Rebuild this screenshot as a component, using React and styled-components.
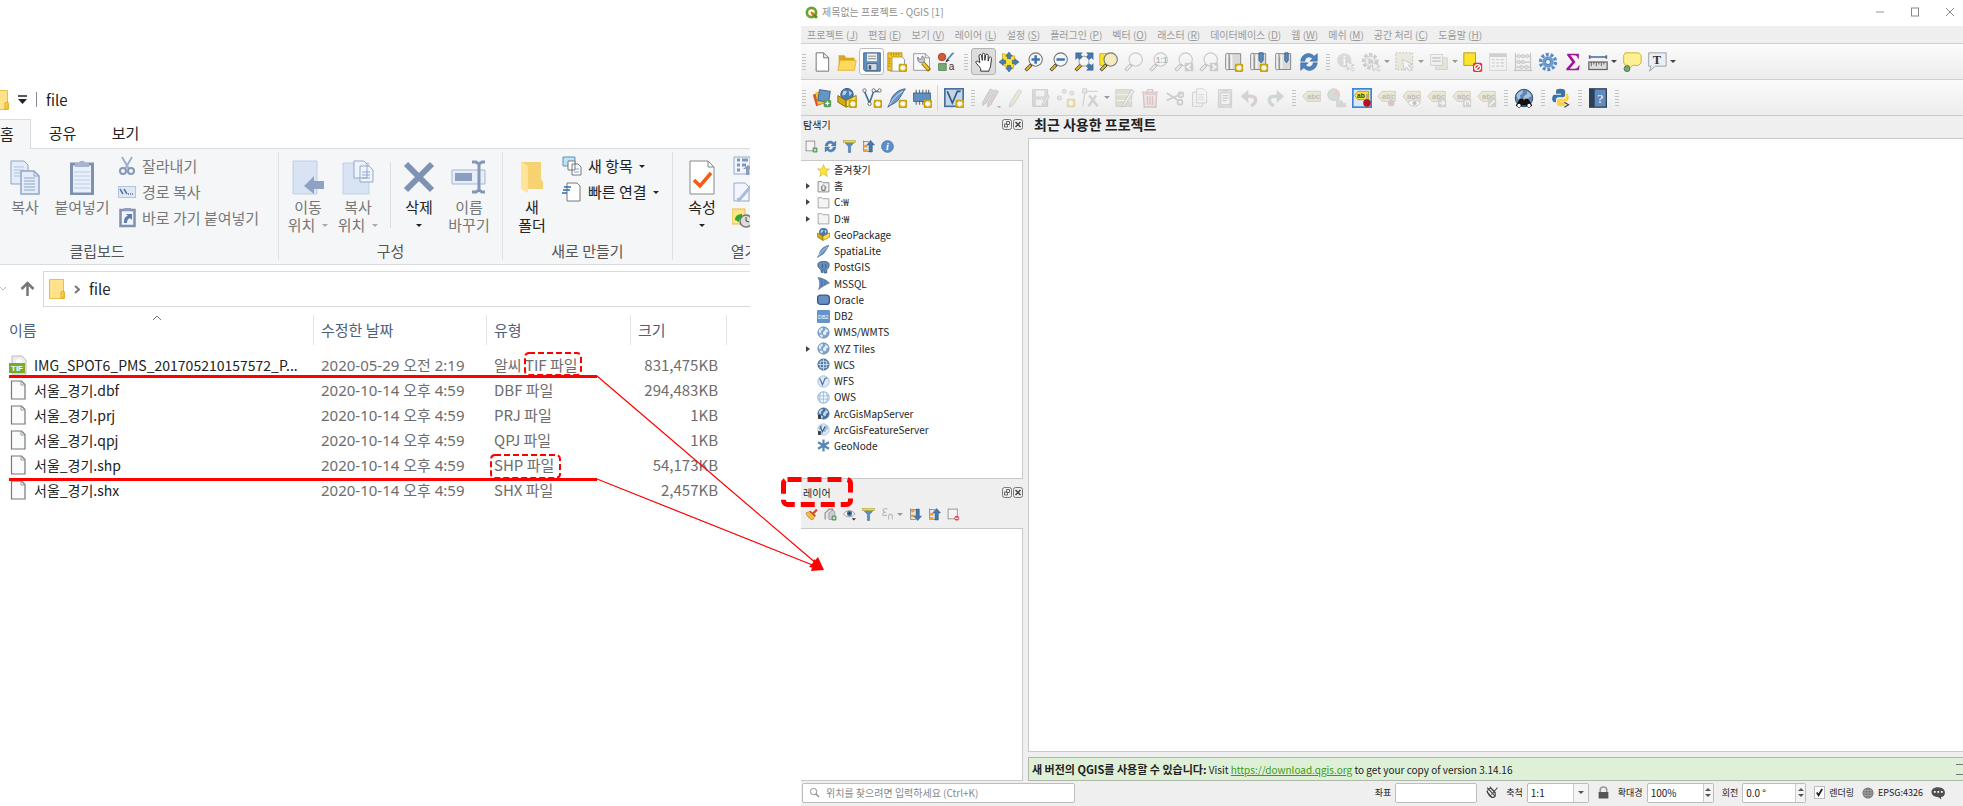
import React from 'react';
import styled, { createGlobalStyle, css } from 'styled-components';

const GlobalStyle = createGlobalStyle`
  * { box-sizing: border-box; }
  body { margin: 0; background: #fff; }
  button, input, select { font: inherit; color: inherit; }
`;

const korean = '"Noto Sans CJK KR", "Noto Sans", sans-serif';

/* ---------- icons ---------- */

const Badge = ({ x = 13, y = 13 }) => (
  <g transform={`translate(${x} ${y})`}>
    <rect width="10" height="10" rx="1.5" fill="#c9a40c" />
    <path d="M5 1.5v7M1.5 5h7M2.5 2.5l5 5M7.5 2.5l-5 5" stroke="#fff" strokeWidth="1.3" />
  </g>
);
const Plus = ({ x = 14, y = 14 }) => (
  <g transform={`translate(${x} ${y})`}>
    <rect width="9" height="9" rx="2" fill="#5a9a5f" />
    <path d="M4.500 2v5M2 4.500h5" stroke="#fff" strokeWidth="1.500" />
  </g>
);
const Lens = ({ children, fill = '#f4f6f8', handle = '#e6b422' }) => (
  <>
    <path d="M9 15l-7 7" stroke="#3b3b3b" strokeWidth="4" />
    <path d="M8 16l-5.500 5.500" stroke={handle} strokeWidth="2.500" />
    <circle cx="14" cy="9" r="8" fill={fill} stroke="#777" strokeWidth="1.300" />
    {children}
  </>
);
const Book = () => (
  <>
    <path d="M3 2h17v19H6V6H3z" fill="#d9d9d9" stroke="#777" />
    <path d="M2 3c0-2 4-2 4 0v17c0 2-4 2-4 0z" fill="#f0f0f0" stroke="#777" />
    <path d="M9 3v17" stroke="#f5f5f5" strokeWidth="2" />
  </>
);
const Tag = () => (
  <>
    <path d="M1 10l5-6h16v12H6z" fill="#d9cf9a" stroke="#8d8660" />
    <text x="6" y="13" fontSize="9" fontFamily="Liberation Sans" fontWeight="700" fill="#555">abc</text>
  </>
);
const Globe = ({ sea = '#7fa6cf', land = '#e6eff8', ring = '#4a6f99' }) => (
  <>
    <circle cx="12" cy="12" r="10.500" fill={sea} stroke={ring} />
    <path d="M3 9c2-4 5-6 8-6l-1 4-3 2 1 3-3 2zM12 10l4-3-1-3c3 1 5 3 6 6l-3 1-2 5-3 1-2-3zM7 15l4 2-1 4c-2 0-4-2-5-4z" fill={land} />
  </>
);
const Box = () => (
  <>
    <circle cx="12" cy="8" r="7.500" fill="#4a7bb0" stroke="#274b75" />
    <path d="M8 3l4 1-2 4-4 1zM14 3l4 3-3 4z" fill="#bcd3ea" />
    <path d="M1 9l10 6v8L1 17z" fill="#d6ab10" stroke="#7d650c" />
    <path d="M11 15l12-6v8l-12 6z" fill="#ffe23d" stroke="#7d650c" />
  </>
);
const Quill = () => (
  <>
    <path d="M22 1C13 2 6 8 4 17l-3 6c5-4 8-4 12-8 4-5 6-10 9-14z" fill="#6c99c9" stroke="#34587f" />
    <path d="M3 20C8 12 13 7 19 4" stroke="#e3edf7" fill="none" />
  </>
);
const Pages = () => (
  <g fill="#e4ecf8" stroke="#8fa5c8">
    <path d="M1 1h13l4 4v19H1z" />
    <path d="M4 7h10M4 10h10M4 13h10M4 16h10" opacity=".6" />
    <path d="M11 11h13l5 5v18H11z" strokeWidth="1.500" />
    <path d="M24 11v5h5M14 18h11M14 21h11M14 24h11M14 27h11M14 30h11" fill="none" />
  </g>
);

const ICONS = {
  newFile: <path d="M5 1h9l6 6v16H5zM14 1v6h6" fill="#fff" stroke="#777" strokeWidth="1.200" />,
  open: (
    <>
      <path d="M2 4h7l2 3h10v14H2z" fill="#d9a520" />
      <path d="M1 22l3-12h19l-2 12z" fill="#ffd95b" stroke="#e3b02e" />
    </>
  ),
  save: (
    <>
      <path d="M2 1h20v22H4l-2-2z" fill="#6490bd" stroke="#36597f" />
      <rect x="6" y="2" width="12" height="9" fill="#f1f1f1" />
      <path d="M7 5h10M7 8h10" stroke="#777" />
      <rect x="6" y="14" width="12" height="8" fill="#d5dbe2" stroke="#46617f" />
      <rect x="8" y="16" width="3" height="5" fill="#36597f" />
    </>
  ),
  layoutNew: (
    <>
      <path d="M4 5h13l4 4v14H4z" fill="#fff" stroke="#888" />
      <path d="M1 1h17v5H6v16H1z" fill="#f4c62f" stroke="#b88a08" />
      <path d="M5 2v2M8 2v2M11 2v2M14 2v2M2 8h2M2 11h2M2 14h2M2 17h2" stroke="#8d6a08" />
      <Badge x={14} y={14} />
    </>
  ),
  layoutManager: (
    <>
      <path d="M2 2h14l5 5v15H2z" fill="#fafafa" stroke="#8b8b8b" />
      <path d="M16 2v5h5" fill="none" stroke="#8b8b8b" />
      <path d="M13 13l8 9" stroke="#8d6a08" strokeWidth="5" />
      <path d="M13 13l7 8" stroke="#f0c22e" strokeWidth="3" />
      <path d="M7 6l2 3 3-1v-3c3 1 4 4 2 7l-3 1c-3 0-5-3-4-7z" fill="#c9ced4" stroke="#666f78" />
    </>
  ),
  style: (
    <>
      <circle cx="6" cy="6" r="4.500" fill="#d35a35" stroke="#993d20" />
      <path d="M21 1l-7 8-2-1 6-7z" fill="#5c88b8" />
      <path d="M12 8l3 2-5 3z" fill="#333" />
      <rect x="2" y="14" width="9" height="8" fill="#77aa77" stroke="#4d7f4f" />
      <text x="14" y="22" fontSize="12" fontFamily="Liberation Sans" fill="#333">a</text>
    </>
  ),
  hand: <path d="M8 23v-3c-1-3-5-5-6-8 1-2 3-1 5 1L6 5c0-2 2-3 3-1l1 6V3c0-2 3-2 3 0v7l1-6c0-2 3-2 3 0v7l1-4c1-2 3-1 3 1l-1 8c0 3-2 4-2 7z" fill="#fff" stroke="#333" strokeWidth="1.200" />,
  panSelection: (
    <>
      <path d="M4 2l15 3-2 15-12-4z" fill="#fbe32d" stroke="#c9ae12" />
      <g fill="#4d7bb0" stroke="#2f557f" strokeWidth=".6">
        <path d="M12 0l4 5h-2v3h-4V5H8z" /><path d="M12 24l4-5h-2v-3h-4v3H8z" />
        <path d="M0 12l5-4v2h3v4H5v2z" /><path d="M24 12l-5-4v2h-3v4h3v2z" />
      </g>
    </>
  ),
  zoomIn: <Lens><path d="M14 4v10M9 9h10" stroke="#3f73ae" strokeWidth="3" /></Lens>,
  zoomOut: <Lens><path d="M9 9h10" stroke="#3f73ae" strokeWidth="3" /></Lens>,
  zoomFull: (
    <>
      <path d="M9 15l-7 7" stroke="#3b3b3b" strokeWidth="4" />
      <path d="M8 16l-5.500 5.500" stroke="#e6b422" strokeWidth="2.500" />
      <circle cx="12" cy="11" r="6" fill="#f4f6f8" stroke="#888" />
      <g fill="#4677ad" stroke="#2f557f" strokeWidth=".5">
        <path d="M2 1h8L8 3l2 3-3 3-3-2-2 2z" /><path d="M23 1v8l-2-2-3 2-3-3 2-3-2-2z" />
        <path d="M23 22h-8l2-2-2-3 3-3 3 2 2-2z" />
      </g>
    </>
  ),
  zoomSelection: (
    <>
      <rect x="1" y="2" width="12" height="14" fill="#fbe32d" stroke="#c9ae12" />
      <Lens fill="#f3ecc0" />
    </>
  ),
  zoomLayer: <Lens handle="#ddd" />,
  zoomNative: <Lens handle="#ddd"><text x="8" y="13" fontSize="10" fontWeight="700" fontFamily="Liberation Sans" fill="#444">1:1</text></Lens>,
  zoomLast: <><Lens handle="#ddd" /><rect x="13" y="13" width="10" height="10" fill="#888" /><path d="M20 15l-4 3 4 3" stroke="#fff" strokeWidth="2" fill="none" /></>,
  zoomNext: <><Lens handle="#ddd" /><rect x="13" y="13" width="10" height="10" fill="#888" /><path d="M16 15l4 3-4 3" stroke="#fff" strokeWidth="2" fill="none" /></>,
  bookNew: <><Book /><Badge x={13} y={14} /></>,
  bookMarkNew: <><Book /><path d="M12 1h5v9l-2.500 3L12 10z" fill="#5b8bbf" stroke="#36597f" /><Badge x={13} y={14} /></>,
  bookMark: <><Book /><path d="M13 1h4v9l-2 3-2-3z" fill="#5b8bbf" stroke="#36597f" /></>,
  refresh: (
    <g fill="#4d82bd" stroke="#2e5f96" strokeWidth=".6">
      <path d="M2 11C3 2 13-1 18 5l4-3v9h-9l3-3c-4-4-9-1-9 3z" />
      <path d="M22 13c-1 9-11 12-16 6l-4 3v-9h9l-3 3c4 4 9 1 9-3z" />
    </g>
  ),
  identify: (
    <>
      <circle cx="10" cy="10" r="8.500" fill="#aaa" />
      <text x="8" y="15" fontSize="14" fontWeight="700" fontFamily="Liberation Serif" fill="#fff">i</text>
      <path d="M12 11l10 5-4 1 4 4-2 2-4-4-2 3z" fill="#eee" stroke="#777" />
    </>
  ),
  action: (
    <>
      <circle cx="11" cy="11" r="8" fill="none" stroke="#888" strokeWidth="4" strokeDasharray="4 2" />
      <circle cx="11" cy="11" r="6" fill="#ddd" stroke="#888" />
      <path d="M9 7l6 4-6 4z" fill="#888" />
      <path d="M13 12l10 5-4 1 4 4-2 1-4-3-2 3z" fill="#eee" stroke="#777" />
    </>
  ),
  select: (
    <>
      <rect x="1" y="1" width="20" height="20" fill="#d8d3b4" stroke="#777" strokeDasharray="2 2" strokeWidth="1.500" />
      <path d="M9 9l12 6-5 1 4 5-2 2-4-5-3 4z" fill="#fff" stroke="#777" />
    </>
  ),
  selectForm: (
    <>
      <rect x="8" y="7" width="14" height="14" fill="#cfc9a8" stroke="#999" />
      <rect x="2" y="3" width="14" height="13" fill="#eee" stroke="#888" />
      <path d="M4 7h10M4 11h10" stroke="#888" strokeWidth="2" />
    </>
  ),
  deselect: (
    <>
      <rect x="1" y="1" width="14" height="15" fill="#fbe32d" stroke="#a8920a" />
      <rect x="12" y="13" width="11" height="11" rx="2" fill="#e0343a" />
      <circle cx="17.500" cy="18.500" r="3.500" fill="none" stroke="#fff" strokeWidth="1.500" />
      <path d="M15 21l5-5" stroke="#fff" strokeWidth="1.500" />
    </>
  ),
  table: (
    <>
      <rect x="2" y="2" width="20" height="20" fill="#f2f2f2" stroke="#999" />
      <path d="M2 4h20" stroke="#888" strokeWidth="4" />
      <path d="M5 9h3M5 13h3M5 17h3M10 9h3M10 13h3M10 17h3M15 9h4M15 13h4M15 17h4" stroke="#888" strokeWidth="1.500" />
    </>
  ),
  abacus: (
    <>
      <path d="M3 1v22M21 1v22M1 22h22M3 5h18M3 12h18M3 18h18" stroke="#777" fill="none" strokeWidth="1.500" />
      <g fill="#bbb" stroke="#777"><circle cx="7" cy="5" r="2" /><circle cx="12" cy="5" r="2" /><circle cx="17" cy="5" r="2" /><circle cx="7" cy="12" r="2" /><circle cx="12" cy="12" r="2" /><circle cx="10" cy="18" r="2" /><circle cx="16" cy="18" r="2" /></g>
    </>
  ),
  gear: (
    <>
      <circle cx="12" cy="12" r="9" fill="none" stroke="#5b8bc4" strokeWidth="4" strokeDasharray="3.500 2.150" />
      <circle cx="12" cy="12" r="7" fill="#6f9bd0" />
      <circle cx="12" cy="12" r="3" fill="#f4f4f4" stroke="#3f6da3" />
    </>
  ),
  sigma: <path d="M5 2h14v6h-1c-1-3-2-4-5-4H9l6 8-7 8h6c3 0 4-1 5-4h1l-1 6H4v-2l7-8-6-8z" fill="#a0159a" />,
  ruler: (
    <>
      <path d="M2 6h20M2 4v4M22 4v4" stroke="#4a6a94" strokeWidth="2" />
      <rect x="1" y="12" width="22" height="9" fill="#ddd" stroke="#666" strokeWidth="1.500" />
      <path d="M4 12v5M7 12v3M10 12v5M13 12v3M16 12v5M19 12v3" stroke="#555" />
    </>
  ),
  mapTip: (
    <>
      <path d="M4 1h16l3 3v9l-3 3h-7l-6 5 1-5H4l-2-3V4z" fill="#fbf092" stroke="#c6a814" />
      <circle cx="6" cy="20" r="3.500" fill="#75a877" stroke="#446f46" />
    </>
  ),
  textNote: (
    <>
      <path d="M2 1h21v16H10l-7 6 2-6H2z" fill="#e9eff5" stroke="#8f9498" />
      <text x="7" y="14" fontSize="15" fontWeight="700" fontFamily="Liberation Serif" fill="#333">T</text>
    </>
  ),
  dataSource: (
    <>
      <path d="M1 8l11-4 4 14-11 4z" fill="#d4572b" />
      <path d="M4 5l12-2 2 14-11 3z" fill="#f2c230" />
      <path d="M9 2l13 2-2 13-13-2z" fill="#6594c6" stroke="#34587f" />
      <Plus />
    </>
  ),
  geoPackage: <Box />,
  geoPackageNew: <><Box /><Badge x={14} y={14} /></>,
  shapefileNew: (
    <>
      <path d="M3 4l6 14 5-14h6" stroke="#456f9c" strokeWidth="2" fill="none" />
      <g fill="#fff" stroke="#555"><circle cx="3" cy="3" r="2" /><circle cx="9" cy="19" r="2" /><circle cx="14" cy="3" r="2" /><circle cx="21" cy="3" r="2" /></g>
      <Badge x={14} y={14} />
    </>
  ),
  feather: <Quill />,
  featherNew: <><Quill /><Badge x={14} y={14} /></>,
  memory: (
    <>
      <path d="M5 2v18M9 2v18M13 2v18M17 2v18M20 2v18" stroke="#777" strokeWidth="1.500" />
      <rect x="2" y="6" width="20" height="10" fill="#5f8fc4" stroke="#34587f" />
      <Badge x={14} y={14} />
    </>
  ),
  virtualLayer: (
    <>
      <rect x="1" y="1" width="22" height="21" fill="#c3d6ea" stroke="#4c7099" strokeWidth="2" />
      <path d="M4 4l6 14 6-14h4" stroke="#34587f" strokeWidth="2" fill="none" />
      <Badge x={14} y={14} />
    </>
  ),
  pencils: <><path d="M2 17L11 1l4 2-9 15-4 3z" fill="#999" stroke="#777" /><path d="M8 18L17 2l4 2-9 16-4 3z" fill="#b98d8d" stroke="#777" /><path d="M19 22h5l-2 2z" fill="#222" /></>,
  pencil: <path d="M5 18L15 2l4 2L9 20l-5 3z" fill="#d5cda5" stroke="#888" />,
  saveEdit: <><path d="M2 2h18v20H2z" fill="#aaa" stroke="#777" /><path d="M6 3h10v7H6zM6 14h9v7H6z" fill="#eee" /><path d="M13 20l7-12 2 2-6 11z" fill="#dba" stroke="#888" /></>,
  addPoint: <><g fill="#ccc" stroke="#888"><circle cx="4" cy="12" r="2.500" /><circle cx="10" cy="4" r="2.500" /><circle cx="19" cy="6" r="2.500" /></g><Badge x={13} y={13} /></>,
  vertex: <><path d="M5 4h15M5 4L2 22" stroke="#999" strokeWidth="1.500" fill="none" /><path d="M10 9l10 13M18 9L9 22" stroke="#999" strokeWidth="3" /><rect x="2" y="1" width="5" height="5" fill="#ccc" stroke="#888" /></>,
  modify: <><rect x="1" y="2" width="19" height="20" fill="#b9b68e" stroke="#888" /><path d="M1 8h19M1 15h19" stroke="#fff" /><path d="M9 20L20 2l3 2-11 17-4 2z" fill="#ddd" stroke="#777" /></>,
  trash: <><path d="M4 7h16l-1 16H5z" fill="#e3c6c6" stroke="#a66" strokeWidth="1.500" /><path d="M2 5h20M9 5V2h6v3M9 10v10M12 10v10M15 10v10" stroke="#a66" strokeWidth="1.500" fill="none" /></>,
  cut: <><path d="M2 6l14 9M2 15L20 7" stroke="#888" strokeWidth="2" /><circle cx="19" cy="8" r="3" fill="none" stroke="#888" strokeWidth="2" /><circle cx="18" cy="17" r="3" fill="none" stroke="#888" strokeWidth="2" /></>,
  copy: <><path d="M3 5h9l3 3v14H3z" fill="#eee" stroke="#888" /><path d="M8 1h8l4 4v13H8z" fill="#f4f4f4" stroke="#888" /><path d="M10 8h7M10 11h7M10 14h7" stroke="#999" /></>,
  paste: <><rect x="4" y="2" width="16" height="21" fill="#bbb" stroke="#888" /><rect x="7" y="6" width="11" height="14" fill="#f4f4f4" stroke="#888" /><path d="M9 3h7M9 9h7M9 12h7M9 15h5" stroke="#888" strokeWidth="1.500" /></>,
  undo: <><path d="M8 10h6c7 0 6 9-1 11" stroke="#a98f8f" strokeWidth="4" fill="none" /><path d="M1 10l9-8v16z" fill="#a98f8f" /></>,
  redo: <><path d="M16 10h-6c-7 0-6 9 1 11" stroke="#8fa08f" strokeWidth="4" fill="none" /><path d="M23 10l-9-8v16z" fill="#8fa08f" /></>,
  label: <Tag />,
  diagram: <><circle cx="8" cy="8" r="7" fill="#9bb09b" stroke="#777" /><path d="M8 8V1a7 7 0 0 1 7 7z" fill="#c88" /><rect x="11" y="11" width="4" height="12" fill="#9a9" /><rect x="15" y="15" width="4" height="8" fill="#99a" /><rect x="19" y="18" width="4" height="5" fill="#c99" /></>,
  labelPin: (
    <>
      <rect x="1" y="1" width="22" height="22" fill="#dbe8f6" stroke="#3d83d9" strokeWidth="2" />
      <path d="M3 9l4-5h13v10H7z" fill="#f9e33c" stroke="#a99311" />
      <text x="6" y="12" fontSize="8" fontWeight="700" fontFamily="Liberation Sans" fill="#333">ab</text>
      <path d="M18 7v8" stroke="#b99" strokeWidth="2" />
      <circle cx="18" cy="18" r="4.500" fill="#b3121b" />
    </>
  ),
  labelPinGray: <><Tag /><path d="M17 7v8" stroke="#999" strokeWidth="2" /><circle cx="17" cy="18" r="4" fill="#a77" /></>,
  labelEye: <><Tag /><path d="M7 18c4-5 11-5 15 0-4 5-11 5-15 0z" fill="#fff" stroke="#777" /><circle cx="15" cy="18" r="2.500" fill="#666" /></>,
  labelMove: <><Tag /><rect x="13" y="13" width="10" height="10" fill="#999" /><path d="M15 18h6M18 15l3 3-3 3" stroke="#fff" strokeWidth="1.500" fill="none" /></>,
  labelRotate: <><Tag /><rect x="13" y="13" width="10" height="10" fill="#999" /><path d="M16 21v-3a2 2 0 0 1 5 0v2" stroke="#fff" strokeWidth="1.500" fill="none" /></>,
  labelEdit: <><Tag /><rect x="13" y="13" width="10" height="10" fill="#998" /><path d="M15 21l6-6" stroke="#fff" strokeWidth="2" /></>,
  metaSearch: (
    <>
      <Globe sea="#5f86b3" land="#a9c3df" ring="#2d435e" />
      <path d="M7 13h4l1 2 1-2h4l5 8-4 3-4-3h-4l-4 3-4-3z" fill="#111" />
      <circle cx="6" cy="21" r="2" fill="#fff" /><circle cx="18" cy="21" r="2" fill="#fff" />
    </>
  ),
  python: (
    <>
      <path d="M11 1c-4 0-5 1-5 3v3h6v1H4c-3 0-4 8 0 9h2v-3c0-2 1-3 3-3h5c2 0 3-1 3-3V4c0-2-2-3-6-3z" fill="#3c74a6" />
      <path d="M12 22c4 0 5-1 5-3v-2h-6v-1h8c3 0 3-9 0-9h-1v3c0 2-1 3-3 3h-5c-2 0-3 1-3 3v3c0 2 1 3 5 3z" fill="#fdd23f" />
      <path d="M16 17l5 3-5 3" stroke="#444" strokeWidth="1.500" fill="none" />
    </>
  ),
  help: (
    <>
      <rect x="2" y="1" width="20" height="22" fill="#5f8dc0" stroke="#2a3d55" strokeWidth="1.500" />
      <rect x="2" y="1" width="6" height="22" fill="#2e4057" />
      <text x="11" y="18" fontSize="16" fontFamily="Liberation Serif" fill="#fff">?</text>
    </>
  ),
  addLayer: <><rect x="2" y="2" width="16" height="18" fill="#f4f4f4" stroke="#888" strokeWidth="1.500" /><Plus x={14} y={14} /></>,
  removeLayer: <><rect x="2" y="2" width="17" height="18" fill="#f4f4f4" stroke="#888" strokeWidth="1.500" /><circle cx="18" cy="19" r="4.500" fill="#dc4a50" /><path d="M15 19h6" stroke="#fff" strokeWidth="2" /></>,
  filter: <><path d="M2 3h20l-8 9v11h-4V12z" fill="#5e8ec3" stroke="#3e6a9c" /><rect x="1" y="1" width="22" height="4" fill="#e8dc4c" stroke="#a99e34" /></>,
  collapse: <><path d="M3 1v20M3 3h10M3 21h10" stroke="#777" fill="none" strokeWidth="1.500" /><rect x="4" y="9" width="6" height="5" fill="#f29b2e" /><rect x="4" y="17" width="6" height="5" fill="#f29b2e" /><path d="M16 1l7 8h-4v13h-6V9H9z" fill="#4779b0" stroke="#2b537f" /></>,
  expand: <><path d="M3 1v20M3 3h10M3 21h10" stroke="#777" fill="none" strokeWidth="1.500" /><rect x="4" y="3" width="6" height="5" fill="#f29b2e" /><rect x="4" y="12" width="6" height="5" fill="#f29b2e" /><path d="M16 23l7-8h-4V2h-6v13H9z" fill="#4779b0" stroke="#2b537f" /></>,
  info: <><circle cx="12" cy="12" r="11" fill="#5d8ec7" stroke="#3b6aa1" /><text x="9" y="19" fontSize="19" fontStyle="italic" fontWeight="700" fontFamily="Liberation Serif" fill="#fff">i</text></>,
  brush: <><path d="M22 3l-8 8" stroke="#d9442c" strokeWidth="4" /><path d="M2 9l8-3 9 8-5 8C8 20 3 15 2 9z" fill="#f5c03c" stroke="#b8562c" /><path d="M9 6l10 9" stroke="#b8562c" strokeWidth="3" /></>,
  group: <><path d="M2 21V9l8-7h6v18" fill="#e5e5e5" stroke="#888" strokeWidth="2" /><path d="M9 21V9l7-5 4 3v14z" fill="#ccd" stroke="#777" /><Plus x={14} y={14} /></>,
  eye: <><path d="M1 11c5-8 16-8 21 0-5 7-16 7-21 0z" fill="#fff" stroke="#888" strokeWidth="1.500" /><circle cx="12" cy="10" r="5" fill="#4d7bb0" /><circle cx="12" cy="10" r="2" fill="#222" /><path d="M16 19h8l-4 4z" fill="#333" /></>,
  expression: <g opacity=".6"><path d="M12 2C7 0 3 2 4 5c0 2 3 3 5 3-7 0-8 6-2 6l4-1" fill="none" stroke="#999" strokeWidth="2" /><path d="M14 12v6c0 5 7 5 7 0v-6" fill="none" stroke="#999" strokeWidth="2" transform="rotate(180 17.500 16.500)" /></g>,
  star: <path d="M12 1l3 8h8l-6 5 2 9-7-5-7 5 2-9-6-5h8z" fill="#ffe537" stroke="#c9a40c" />,
  home: <><path d="M2 3h7l2 2h11v17H2z" fill="#f3f3f3" stroke="#777" strokeWidth="1.500" /><path d="M7 14l5-5 5 5M9 13v6h6v-6" fill="none" stroke="#444" strokeWidth="1.500" /></>,
  folder: <path d="M2 3h7l2 2h11v17H2z" fill="#f3f3f3" stroke="#999" strokeWidth="1.500" />,
  postgis: <path d="M3 3c5-3 14-3 18 0 3 3 1 10-3 13v6h-5v-7l-2 1v5H8l-1-6C2 14 0 6 3 3zM10 5v8M16 5v8" fill="#668fbe" stroke="#34587f" strokeWidth="1.500" />,
  mssql: <><path d="M2 1c7 1 15 4 21 10C16 14 9 18 3 23c3-7 3-15-1-22z" fill="#668fbe" stroke="#34587f" /><path d="M8 4c2 4 2 8 0 14M14 6c2 3 2 6 0 9" stroke="#34587f" fill="none" /></>,
  oracle: <rect x="1" y="4" width="22" height="17" rx="6" fill="#668fc4" stroke="#34587f" strokeWidth="2.500" />,
  db2: <><rect width="24" height="24" rx="2" fill="#6794c8" /><text x="2" y="16" fontSize="10" fontFamily="Liberation Sans" fill="#fff">DB2</text></>,
  globe: <Globe />,
  wcs: <><Globe sea="#4b75a6" land="#5f89b9" ring="#34587f" /><path d="M2 12h20M12 2v20M6 6h12v12H6z" stroke="#dce8f4" fill="none" strokeWidth="1.500" /></>,
  wfs: <><circle cx="12" cy="12" r="10.500" fill="#dfe9f4" stroke="#6d93be" /><path d="M5 6l5 12 5-12h4" fill="none" stroke="#496f9b" strokeWidth="2" /></>,
  ows: <><circle cx="12" cy="12" r="10.500" fill="#eff5fb" stroke="#7ba2cc" strokeWidth="1.500" /><path d="M2 9h20M2 15h20M12 1v22M7 2c-3 7-3 13 0 20M17 2c3 7 3 13 0 20" fill="none" stroke="#7ba2cc" /></>,
  arcMap: <><Globe sea="#47709e" land="#c3d6ea" /><path d="M2 15h5v7H2z" fill="#333" /></>,
  arcFeature: <><Globe sea="#e3ecf5" land="#9db9d6" ring="#7ba2cc" /><path d="M6 6l4 10 5-10" fill="none" stroke="#34587f" strokeWidth="2" /><path d="M2 15h5v7H2z" fill="#333" /></>,
  geonode: <path d="M12 1v22M2 6l20 12M22 6L2 18" stroke="#5a85b5" strokeWidth="4" />,
  mouse: <><path d="M4 3l15 16M9 1l10 12M3 10l10 11" stroke="#444" strokeWidth="2" /><ellipse cx="12" cy="13" rx="6" ry="9" transform="rotate(-35 12 13)" fill="none" stroke="#444" strokeWidth="2" /><path d="M23 3L12 16" stroke="#555" strokeWidth="2" /></>,
  lock: <><path d="M6 12V7c0-7 12-7 12 0v5" fill="none" stroke="#999" strokeWidth="3" /><rect x="3" y="11" width="18" height="12" rx="1" fill="#555" /></>,
  crs: <><circle cx="12" cy="12" r="11" fill="#777" /><path d="M1 12h22M12 1v22M4 7h16M4 17h16M8 3c-3 6-3 12 0 18M16 3c3 6 3 12 0 18" stroke="#ccc" strokeWidth=".7" fill="none" /></>,
  chat: <><path d="M12 2c15 0 15 16 5 17l1 4-6-4C-3 18-3 2 12 2z" fill="#505050" /><path d="M5 10h3M11 10h3M17 10h3" stroke="#fff" strokeWidth="3" /></>,
  search: <><circle cx="10" cy="10" r="7" fill="none" stroke="#888" strokeWidth="2" /><path d="M15 15l7 7" stroke="#888" strokeWidth="3" /></>,
  qgis: <><circle cx="12" cy="12" r="8.500" fill="none" stroke="#6aa329" strokeWidth="5" /><path d="M13 13l9 9" stroke="#578f1d" strokeWidth="5" /><path d="M11 11l5 5" stroke="#ee7913" strokeWidth="4" /></>,
};

const Svg = styled.svg`
  display: block;
  flex: none;
  width: ${(p) => p.$w || 20}px;
  height: ${(p) => p.$h || p.$w || 20}px;
  opacity: ${(p) => (p.$dim ? 0.35 : 1)};
`;
const Icon = ({ name, size = 20, dim }) => (
  <Svg viewBox="0 0 24 24" $w={size} $dim={dim} aria-hidden="true">{ICONS[name]}</Svg>
);
const Art = ({ w, h, children }) => (
  <Svg viewBox={`0 0 ${w} ${h}`} $w={w} $h={h} aria-hidden="true">{children}</Svg>
);

/* ---------- page ---------- */

const Page = styled.div`
  position: relative;
  display: flex;
  gap: 51px;
  min-height: 100vh;
  background: #fff;
`;

/* ---------- file explorer ---------- */

const Explorer = styled.section`
  flex: 0 1 750px;
  min-width: 0;
  overflow: hidden;
  padding-top: 80px;
  font: 15px/18px ${korean};
  color: #222;
`;
const TitleRow = styled.header`
  display: flex;
  align-items: center;
  height: 39px;
  gap: 9px;
`;
const Divider = styled.span`
  width: 1px;
  height: 15px;
  background: #8a8a8a;
`;
const Tabs = styled.nav`
  display: flex;
  height: 30px;
  border-bottom: 1px solid #dadbdc;
`;
const Tab = styled.button`
  height: 30px;
  padding: 0 0 2px;
  width: ${(p) => (p.$active ? 31 : 63)}px;
  text-align: ${(p) => (p.$active ? 'left' : 'center')};
  border: solid #dadbdc;
  border-width: ${(p) => (p.$active ? '1px 1px 0 0' : '0')};
  background: ${(p) => (p.$active ? '#f5f6f7' : 'none')};
`;
const Ribbon = styled.div`
  display: flex;
  height: 116px;
  padding-top: 3px;
  background: #f5f6f7;
  border-bottom: 1px solid #dadbdc;
`;
const RibbonGroup = styled.section`
  flex: none;
  display: flex;
  flex-direction: column;
  justify-content: space-between;
  width: ${(p) => p.$width}px;
  height: 108px;
  border-right: 1px solid #e0e1e3;
`;
const GroupBody = styled.div`
  display: flex;
  padding: 7px 0 0 ${(p) => p.$pad || 0}px;
`;
const GroupName = styled.h2`
  margin: 0;
  padding-right: ${(p) => p.$shift || 0}px;
  font: inherit;
  color: #555;
  text-align: center;
`;
const BigButton = styled.button`
  display: flex;
  flex-direction: column;
  align-items: center;
  width: ${(p) => p.$width || 50}px;
  padding: 0;
  border: 0;
  background: none;
  line-height: 18px;
  white-space: nowrap;
  color: ${(p) => (p.$on ? '#222' : '#777')};
`;
const BigArt = styled.span`
  display: flex;
  align-items: center;
  height: 36px;
  margin-bottom: 3px;
`;
const Line = styled.span`
  display: flex;
  align-items: center;
  gap: 7px;
  height: 18px;
`;
const SmallList = styled.div`
  display: flex;
  flex-direction: column;
  gap: 8px;
  margin: -2px 0 0 ${(p) => p.$gap || 0}px;
`;
const SmallButton = styled.button`
  display: flex;
  align-items: center;
  gap: 6px;
  height: 18px;
  padding: 0;
  border: 0;
  background: none;
  white-space: nowrap;
  color: ${(p) => (p.$on ? '#222' : '#777')};
`;
const RibbonRule = styled.span`
  width: 1px;
  height: 66px;
  margin: 3px 3px 0 7px;
  background: #dcdde0;
`;
const Caret = styled.span`
  flex: none;
  width: 0;
  border: solid transparent;
  border-width: ${(p) => p.$size || 4}px ${(p) => p.$size || 4}px 0;
  border-top-color: ${(p) => p.$color || '#222'};
`;
const AddressRow = styled.div`
  display: flex;
  align-items: center;
  height: 36px;
  margin: 6px 0 8px;
`;
const AddressNav = styled.div`
  display: flex;
  align-items: center;
  justify-content: space-between;
  width: 43px;
  padding-right: 8px;
`;
const AddressBox = styled.div`
  flex: 1;
  display: flex;
  align-items: center;
  gap: 9px;
  height: 36px;
  padding-left: 5px;
  border: 1px solid #d9d9d9;
  border-right: 0;
`;
const Files = styled.table`
  table-layout: fixed;
  width: 726px;
  border-collapse: collapse;
`;
const HeadCell = styled.th`
  position: relative;
  height: 37px;
  padding: 0 0 7px;
  font-weight: 400;
  text-align: left;
  color: #4c607a;
  span {
    display: block;
    height: 30px;
    line-height: 30px;
    padding-left: ${(p) => p.$pad || 7}px;
    border-right: 1px solid #e3e3e3;
  }
  svg {
    position: absolute;
    left: 50%;
    top: 0;
    margin-left: -5px;
  }
`;
const Cell = styled.td`
  height: 25px;
  padding: 0 9px 0 ${(p) => p.$pad || 7}px;
  white-space: nowrap;
  color: #6d6d6d;
  text-align: ${(p) => (p.$right ? 'right' : 'left')};
`;
const DateCell = styled(Cell)`
  font-family: "Noto Sans", ${korean};
`;
const FileName = styled.span`
  display: flex;
  align-items: center;
  gap: 7px;
  font-size: 14px;
  color: #222;
`;

const FolderArt = ({ w = 16 }) => (
  <Svg viewBox={`${16 - w} 0 ${w} 20`} $w={w} $h={20} aria-hidden="true">
    <path d="M.5.5h14v12l1 1v6H.5z" fill="#ffe28a" stroke="#e8bd4a" />
    <path d="M12 19v-6l3-1v7z" fill="#ffd24d" stroke="#e0aa25" />
  </Svg>
);
const PageArt = () => (
  <Art w={18} h={20}>
    <path d="M2.500 1h10l3.500 3.500V19H2.500z" fill="#fafbfc" stroke="#777" strokeWidth="1.200" />
    <path d="M12 1v4h4" fill="none" stroke="#999" />
  </Art>
);
const TifArt = () => (
  <Art w={18} h={20}>
    <path d="M3 1h10l4 4v14H3z" fill="#ededed" stroke="#bbb" />
    <circle cx="10" cy="7" r="3" fill="#fff" />
    <rect y="8" width="16" height="10" fill="#78ac28" />
    <text x="2" y="16" fontSize="8" fontWeight="700" fontFamily="Liberation Sans" fill="#fff">TIF</text>
  </Art>
);

const files = [
  ['IMG_SPOT6_PMS_201705210157572_P...', '2020-05-29 오전 2:19', '알씨 TIF 파일', '831,475KB', true],
  ['서울_경기.dbf', '2020-10-14 오후 4:59', 'DBF 파일', '294,483KB'],
  ['서울_경기.prj', '2020-10-14 오후 4:59', 'PRJ 파일', '1KB'],
  ['서울_경기.qpj', '2020-10-14 오후 4:59', 'QPJ 파일', '1KB'],
  ['서울_경기.shp', '2020-10-14 오후 4:59', 'SHP 파일', '54,173KB'],
  ['서울_경기.shx', '2020-10-14 오후 4:59', 'SHX 파일', '2,457KB'],
];

function FileExplorer() {
  return (
    <Explorer>
      <TitleRow>
        <FolderArt w={9} />
        <Art w={9} h={9}><path d="M0 1h9" stroke="#222" strokeWidth="1.500" /><path d="M0 4h9L4.500 9z" fill="#222" /></Art>
        <Divider />
        <span>file</span>
      </TitleRow>
      <Tabs>
        <Tab $active>홈</Tab>
        <Tab>공유</Tab>
        <Tab>보기</Tab>
      </Tabs>
      <Ribbon>
        <RibbonGroup $width={279}>
          <GroupBody>
            <BigButton><BigArt><Art w={30} h={35}><Pages /></Art></BigArt>복사</BigButton>
            <BigButton $width={64}>
              <BigArt>
                <Art w={24} h={35}>
                  <rect x="1.500" y="4" width="21" height="30" fill="#e8f0fb" stroke="#7f90b0" strokeWidth="3" />
                  <path d="M4 12h16M4 16h16M4 20h16M4 24h16M4 28h16" stroke="#bccbe2" />
                  <path d="M5 3h4c0-3 6-3 6 0h4v4H5z" fill="#a6b4cc" />
                </Art>
              </BigArt>
              붙여넣기
            </BigButton>
            <SmallList $gap={4}>
              <SmallButton>
                <Art w={18} h={20}>
                  <path d="M4 1l7 12M14 1L7 13" stroke="#9db0cd" strokeWidth="2" />
                  <circle cx="5" cy="15" r="3" fill="none" stroke="#8598b8" strokeWidth="2" />
                  <circle cx="13" cy="15" r="3" fill="none" stroke="#8598b8" strokeWidth="2" />
                </Art>
                잘라내기
              </SmallButton>
              <SmallButton>
                <Art w={18} h={12}>
                  <rect x=".5" y=".5" width="17" height="11" fill="#dfe9f6" stroke="#b4c5de" />
                  <path d="M2 3l3 5M6 3l3 5M10 8h1M12 8h1M14 8h1" stroke="#5e7398" strokeWidth="1.500" />
                </Art>
                경로 복사
              </SmallButton>
              <SmallButton>
                <Art w={18} h={20}>
                  <rect x="2.500" y="2" width="14" height="16" fill="#f0f5fc" stroke="#7f90b0" strokeWidth="2.500" />
                  <path d="M6 0h7v3H6z" fill="#8fa0bd" />
                  <path d="M6 15c0-4 1-7 4-7L8 6h6v6l-2-2c-2 1-3 2-3 5z" fill="#5f7ba8" />
                </Art>
                바로 가기 붙여넣기
              </SmallButton>
            </SmallList>
          </GroupBody>
          <GroupName $shift={84}>클립보드</GroupName>
        </RibbonGroup>
        <RibbonGroup $width={224}>
          <GroupBody $pad={4}>
            <BigButton>
              <BigArt>
                <Art w={32} h={35}>
                  <path d="M1 1h24v33H1z" fill="#d8e3f4" stroke="#c0cfe6" />
                  <path d="M12 26l10-10v5h10v8H22v5z" fill="#8fa2c3" />
                </Art>
              </BigArt>
              <Line>이동</Line>
              <Line>위치<Caret $size={3} $color="#aaa" /></Line>
            </BigButton>
            <BigButton>
              <BigArt>
                <Art w={32} h={35}>
                  <path d="M1 3h26v31H1z" fill="#d8e3f4" stroke="#c0cfe6" />
                  <path d="M12 1h10l3 3v14H12zM18 6h9l4 4v12H18z" fill="#eef4fc" stroke="#93a8c9" />
                  <path d="M20 12h8M20 15h8M20 18h8" stroke="#93a8c9" />
                </Art>
              </BigArt>
              <Line>복사</Line>
              <Line>위치<Caret $size={3} $color="#aaa" /></Line>
            </BigButton>
            <RibbonRule />
            <BigButton $on>
              <BigArt><Art w={32} h={32}><path d="M3 3l26 26M29 3L3 29" stroke="#7e92b4" strokeWidth="6" /></Art></BigArt>
              <Line>삭제</Line>
              <Line><Caret $size={3} /></Line>
            </BigButton>
            <BigButton>
              <BigArt>
                <Art w={36} h={34}>
                  <path d="M1 10h33v14H1z" fill="#e6eefa" stroke="#a5b7d3" />
                  <path d="M4 13h17v8H4z" fill="#8b9ebf" />
                  <path d="M21 2h4l3 2 3-2h3M28 4v26M21 32h4l3-2 3 2h3" fill="none" stroke="#8496b7" strokeWidth="3" />
                </Art>
              </BigArt>
              <Line>이름</Line>
              <Line>바꾸기</Line>
            </BigButton>
          </GroupBody>
          <GroupName>구성</GroupName>
        </RibbonGroup>
        <RibbonGroup $width={170}>
          <GroupBody $pad={4}>
            <BigButton $on>
              <BigArt>
                <Art w={24} h={33}>
                  <path d="M1 1h20v17l2 3v7H6z" fill="#f7d271" />
                  <path d="M1 1l7 4v27l-7-4z" fill="#ffe49a" />
                </Art>
              </BigArt>
              <Line>새</Line>
              <Line>폴더</Line>
            </BigButton>
            <SmallList $gap={5}>
              <SmallButton $on>
                <Art w={20} h={20}>
                  <path d="M1 1h12v9H1z" fill="#bfe3f3" stroke="#4a9bbd" />
                  <path d="M6 5h7v9H6zM10 8h6l3 3v8h-9z" fill="#fff" stroke="#777" />
                  <path d="M12 13h5M12 16h5" stroke="#79a6d8" />
                </Art>
                새 항목<Caret $size={3} />
              </SmallButton>
              <SmallButton $on>
                <Art w={20} h={20}>
                  <path d="M5 1h10l3 3v15H5z" fill="#fff" stroke="#777" />
                  <path d="M2 5h7M1 8h7M0 11h5" stroke="#2b6fb5" strokeWidth="1.500" />
                </Art>
                빠른 연결<Caret $size={3} />
              </SmallButton>
            </SmallList>
          </GroupBody>
          <GroupName>새로 만들기</GroupName>
        </RibbonGroup>
        <RibbonGroup $width={144}>
          <GroupBody $pad={4}>
            <BigButton $on>
              <BigArt>
                <Art w={26} h={35}>
                  <path d="M1 1h18l6 6v27H1zM19 1v6h6" fill="#fff" stroke="#888" />
                  <path d="M5 20l6 6 11-13" fill="none" stroke="#f25c19" strokeWidth="3.500" />
                </Art>
              </BigArt>
              <Line>속성</Line>
              <Line><Caret $size={3} /></Line>
            </BigButton>
            <SmallList $gap={5}>
              <SmallButton aria-label="열기">
                <Art w={20} h={20}>
                  <path d="M2 1h16v17H2z" fill="#f2f6fc" stroke="#93a8c9" />
                  <path d="M5 4h3M5 9h3M5 14h3M10 4h6M10 9h4" stroke="#7f95bb" strokeWidth="3" />
                  <path d="M11 13l5-4 4 4h-3v6h-3v-6z" fill="#8a9dbf" />
                </Art>
              </SmallButton>
              <SmallButton aria-label="편집">
                <Art w={20} h={20}>
                  <path d="M2 1h11l4 4v14H2z" fill="#f2f6fc" stroke="#93a8c9" />
                  <path d="M19 4L8 17l-3 1" fill="none" stroke="#a9bbd8" strokeWidth="3" />
                </Art>
              </SmallButton>
              <SmallButton aria-label="히스토리">
                <Art w={20} h={20}>
                  <path d="M0 1h13v15H0z" fill="#ffe58a" stroke="#e8bd4a" />
                  <circle cx="14" cy="13" r="6" fill="#ddd" stroke="#777" strokeWidth="1.500" />
                  <path d="M14 9v4l3 1" fill="none" stroke="#444" />
                  <path d="M3 12c0-4 3-6 7-6v4c-2 0-3 1-3 4z" fill="#33a532" />
                </Art>
              </SmallButton>
            </SmallList>
          </GroupBody>
          <GroupName>열기</GroupName>
        </RibbonGroup>
      </Ribbon>
      <AddressRow>
        <AddressNav>
          <Art w={6} h={6}><path d="M0 1l3 3 3-3" fill="none" stroke="#bbb" /></Art>
          <Art w={15} h={16}><path d="M7.500 15V2M1.500 8l6-6 6 6" fill="none" stroke="#777" strokeWidth="2.500" /></Art>
        </AddressNav>
        <AddressBox>
          <FolderArt />
          <Art w={6} h={9}><path d="M1 1l4 3.500L1 8" fill="none" stroke="#777" strokeWidth="2" /></Art>
          <span>file</span>
        </AddressBox>
      </AddressRow>
      <Files>
        <colgroup>
          <col width="314" /><col width="173" /><col width="144" /><col width="96" />
        </colgroup>
        <thead>
          <tr>
            <HeadCell $pad={9}>
              <span>이름</span>
              <Art w={10} h={6}><path d="M1 5l4-4 4 4" fill="none" stroke="#777" /></Art>
            </HeadCell>
            <HeadCell><span>수정한 날짜</span></HeadCell>
            <HeadCell><span>유형</span></HeadCell>
            <HeadCell><span>크기</span></HeadCell>
          </tr>
        </thead>
        <tbody>
          {files.map(([name, date, type, size, tif]) => (
            <tr key={name}>
              <Cell $pad={9}><FileName>{tif ? <TifArt /> : <PageArt />}{name}</FileName></Cell>
              <DateCell>{date}</DateCell>
              <Cell>{type}</Cell>
              <Cell $right>{size}</Cell>
            </tr>
          ))}
        </tbody>
      </Files>
    </Explorer>
  );
}

/* ---------- QGIS window ---------- */

const Qgis = styled.section`
  flex: 1;
  min-width: 0;
  height: 100vh;
  min-height: 640px;
  display: flex;
  flex-direction: column;
  overflow: hidden;
  background: #efefef;
  font: 10px/16px ${korean};
  color: #222;
`;
const TitleBar = styled.header`
  flex: none;
  display: flex;
  align-items: center;
  gap: 4px;
  height: 26px;
  padding: 0 8px 2px 4px;
  background: #fff;
  color: #8f8f8f;
`;
const WindowButtons = styled.div`
  display: flex;
  gap: 25px;
  margin-left: auto;
`;
const BareButton = styled.button`
  display: flex;
  align-items: center;
  padding: 0;
  border: 0;
  background: none;
`;
const MenuBar = styled.nav`
  flex: none;
  display: flex;
  align-items: center;
  gap: 10px;
  height: 17px;
  padding-left: 6px;
  color: #9a9a9a;
  white-space: nowrap;
`;
const MenuItem = styled(BareButton)`
  display: block;
`;
const ToolBar = styled.div`
  flex: none;
  display: flex;
  align-items: center;
  height: 36px;
  overflow: hidden;
  border-top: 1px solid #d0d0d0;
  background: linear-gradient(#fbfbfb, #ececec);
`;
const Grip = styled.span`
  flex: none;
  width: 4px;
  height: 18px;
  margin: 0 3px 0 ${(p) => (p.$first ? 1 : 5)}px;
  background: radial-gradient(circle, #c4c4c4 1px, transparent 1px) 0 0 / 2px 3px;
`;
const ToolButton = styled.button`
  flex: none;
  display: flex;
  align-items: center;
  justify-content: ${(p) => (p.$menu ? 'flex-start' : 'center')};
  gap: 3px;
  width: ${(p) => (p.$menu ? 34 : 25)}px;
  height: 27px;
  padding: 0 0 0 ${(p) => (p.$menu ? 2 : 0)}px;
  border: 1px solid transparent;
  border-radius: 3px;
  background: none;
  ${(p) => p.$state === 'hover' && css`background: #fdfdfd; border-color: #bdbdbd;`}
  ${(p) => p.$state === 'down' && css`background: #dcdcdc; border-color: #b3b3b3;`}
`;
const ToolRule = styled.span`
  flex: none;
  width: 1px;
  height: 26px;
  margin: 0 3px;
  background: #d6d6d6;
`;
const Workspace = styled.div`
  flex: 1;
  min-height: 0;
  display: flex;
  gap: 5px;
  border-top: 1px solid #cacaca;
`;
const Docks = styled.div`
  flex: 0 0 222px;
  display: flex;
  flex-direction: column;
`;
const Dock = styled.section`
  flex: ${(p) => p.$grow} 1 0;
  min-height: 0;
  display: flex;
  flex-direction: column;
`;
const DockTitle = styled.header`
  display: flex;
  align-items: center;
  justify-content: space-between;
  height: 17px;
  margin-top: ${(p) => p.$top || 0}px;
  padding-left: 2px;
  h2 { margin: 0; font: inherit; }
  div { display: flex; gap: 1px; }
`;
const DockTools = styled.div`
  display: flex;
  align-items: center;
  height: 27px;
  padding-left: 1px;
`;
const DockTool = styled(BareButton)`
  justify-content: center;
  gap: 3px;
  width: ${(p) => (p.$menu ? 28 : 19)}px;
`;
const DockBody = styled.div`
  flex: 1;
  min-height: 0;
  overflow: hidden;
  background: #fff;
  border: solid #c8c8c8;
  border-width: 1px 1px 1px 0;
`;
const Tree = styled.ul`
  display: flex;
  flex-direction: column;
  justify-content: space-between;
  height: 293px;
  margin: 0;
  padding: 1px 0 0;
  list-style: none;
`;
const TreeItem = styled.li`
  display: flex;
  align-items: center;
  gap: 4px;
  height: 16px;
  padding-left: 4px;
`;
const TreeArrow = styled.span`
  width: 8px;
  border: solid transparent;
  border-width: 3px 0 3px 4px;
  ${(p) => p.$shown && css`
    width: 4px;
    margin: 0 3px 0 1px;
    border-left-color: #444;
  `}
`;
const Main = styled.main`
  flex: 1;
  min-width: 0;
  display: flex;
  flex-direction: column;
`;
const MainTitle = styled.h1`
  margin: 0;
  height: 22px;
  padding-left: 6px;
  font: 700 14px/16px ${korean};
  color: #222;
`;
const Canvas = styled.div`
  flex: 1;
  margin-bottom: 5px;
  background: #fff;
  border: solid #c8c8c8;
  border-width: 1px 0 1px 1px;
`;
const Message = styled.div`
  flex: none;
  display: flex;
  align-items: center;
  justify-content: space-between;
  height: 24px;
  padding-left: 3px;
  background: #dff0d8;
  border: solid #aeb9aa;
  border-width: 1px 0 1px 1px;
  white-space: nowrap;
  overflow: hidden;
  p { margin: 0; }
  b { font-size: 11px; }
  a { color: #3f9b14; }
`;
const Steps = styled.span`
  display: flex;
  flex-direction: column;
  gap: 9px;
  width: 7px;
  i { height: 1px; background: #777; }
`;
const StatusBar = styled.footer`
  flex: none;
  display: flex;
  align-items: center;
  justify-content: space-between;
  height: 25px;
  padding: 0 18px 2px 1px;
  white-space: nowrap;
`;
const boxed = css`
  height: 20px;
  border: 1px solid #bdbdbd;
  border-radius: 2px;
  background: #fff;
`;
const SearchBox = styled.label`
  ${boxed}
  display: flex;
  align-items: center;
  gap: 6px;
  width: 273px;
  padding-left: 6px;
  input {
    flex: 1;
    min-width: 0;
    border: 0;
    outline: 0;
    padding: 0;
    background: none;
  }
  input::placeholder { color: #888; opacity: 1; }
`;
const StatusItems = styled.div`
  display: flex;
  align-items: center;
  gap: 8px;
  font-size: 9px;
`;
const Field = styled.label`
  display: flex;
  align-items: center;
  gap: 4px;
`;
const FieldBox = styled.span`
  ${boxed}
  display: flex;
  align-items: center;
  width: ${(p) => p.$width}px;
  font-size: 10px;
  input, select {
    flex: 1;
    min-width: 0;
    height: 18px;
    padding: 0 0 0 3px;
    border: 0;
    outline: 0;
    appearance: none;
    background: none;
  }
`;
const FieldEnd = styled.span`
  display: flex;
  flex-direction: column;
  align-items: center;
  justify-content: center;
  gap: 3px;
  width: ${(p) => p.$width || 10}px;
  height: 18px;
  border-left: 1px solid #ccc;
  background: #f4f4f4;
`;
const UpCaret = styled(Caret)`
  transform: rotate(180deg);
`;
const Tick = styled.input`
  appearance: none;
  width: 11px;
  height: 13px;
  margin: 0;
  border: 1px solid #bbb;
  background: #fff;
  &:checked {
    background: #fff url("data:image/svg+xml,%3Csvg xmlns='http://www.w3.org/2000/svg' viewBox='0 0 10 10'%3E%3Cpath d='M2 5l2 3 4-7' fill='none' stroke='%23222' stroke-width='2'/%3E%3C/svg%3E") center / 9px no-repeat;
  }
`;

const menus = [['프로젝트', 'J'], ['편집', 'E'], ['보기', 'V'], ['레이어', 'L'], ['설정', 'S'], ['플러그인', 'P'], ['벡터', 'O'], ['래스터', 'R'], ['데이터베이스', 'D'], ['웹', 'W'], ['메쉬', 'M'], ['공간 처리', 'C'], ['도움말', 'H']];

/* A trailing "-" marks a disabled tool, ">" a tool with a menu. */
const fileTools = ['newFile', 'open', 'save', 'layoutNew', 'layoutManager', 'style', '|',
  'hand', 'panSelection', 'zoomIn', 'zoomOut', 'zoomFull', 'zoomSelection', 'zoomLayer-', 'zoomNative-', 'zoomLast-', 'zoomNext-', 'bookNew', 'bookMarkNew', 'bookMark', 'refresh', '|',
  'identify-', 'action->', 'select->', 'selectForm->', 'deselect', 'table-', 'abacus-', 'gear', 'sigma', 'ruler>', 'mapTip', 'textNote>'];
const layerTools = ['dataSource', 'geoPackageNew', 'shapefileNew', 'featherNew', 'memory', '/', 'virtualLayer', '|',
  'pencils-', 'pencil-', 'saveEdit-', 'addPoint-', 'vertex->', 'modify-', 'trash-', 'cut-', 'copy-', 'paste-', 'undo-', 'redo-', '|',
  'label-', 'diagram-', 'labelPin', 'labelPinGray-', 'labelEye-', 'labelMove-', 'labelRotate-', 'labelEdit-', '|',
  'metaSearch', '|', 'python', '|', 'help', '|'];
const toolState = { save: 'hover', hand: 'down' };

const Tools = ({ items }) => (
  <ToolBar role="toolbar">
    <Grip $first />
    {items.map((item, i) => {
      if (item === '|') return <Grip key={i} />;
      if (item === '/') return <ToolRule key={i} />;
      const name = item.replace(/[->]/g, '');
      const dim = item.includes('-');
      const menu = item.includes('>');
      return (
        <ToolButton key={i} aria-label={name} $menu={menu} $state={toolState[name]}>
          <Icon name={name} dim={dim} />
          {menu && <Caret $size={3} $color={dim ? '#999' : '#444'} />}
        </ToolButton>
      );
    })}
  </ToolBar>
);

const sources = [
  ['star', '즐겨찾기'], ['home', '홈', true], ['folder', 'C:₩', true], ['folder', 'D:₩', true],
  ['geoPackage', 'GeoPackage'], ['feather', 'SpatiaLite'], ['postgis', 'PostGIS'], ['mssql', 'MSSQL'],
  ['oracle', 'Oracle'], ['db2', 'DB2'], ['globe', 'WMS/WMTS'], ['globe', 'XYZ Tiles', true],
  ['wcs', 'WCS'], ['wfs', 'WFS'], ['ows', 'OWS'], ['arcMap', 'ArcGisMapServer'],
  ['arcFeature', 'ArcGisFeatureServer'], ['geonode', 'GeoNode'],
];

const DockHeader = ({ title, top }) => (
  <DockTitle $top={top}>
    <h2>{title}</h2>
    <div>
      <BareButton aria-label="분리">
        <Art w={10} h={11}><rect x=".5" y=".5" width="9" height="10" rx="2" fill="#eee" stroke="#777" /><path d="M4.500 2.500h3v3h-3zM2.500 5h3v3h-3z" fill="none" stroke="#666" /></Art>
      </BareButton>
      <BareButton aria-label="닫기">
        <Art w={10} h={11}><rect x=".5" y=".5" width="9" height="10" rx="2" fill="#eee" stroke="#777" /><path d="M2.500 3l5 5M7.500 3l-5 5" stroke="#444" strokeWidth="1.500" /></Art>
      </BareButton>
    </div>
  </DockTitle>
);

const Spin = ({ label, width, value }) => (
  <Field>
    {label}
    <FieldBox $width={width}>
      <input defaultValue={value} />
      <FieldEnd><UpCaret $size={3} $color="#555" /><Caret $size={3} $color="#555" /></FieldEnd>
    </FieldBox>
  </Field>
);

function QgisWindow() {
  return (
    <Qgis>
      <TitleBar>
        <Icon name="qgis" size={13} />
        <span>제목없는 프로젝트 - QGIS [1]</span>
        <WindowButtons>
          <BareButton aria-label="최소화"><Art w={10} h={10}><path d="M1 5h8" stroke="#999" /></Art></BareButton>
          <BareButton aria-label="최대화"><Art w={10} h={10}><rect x="1.500" y="1" width="7" height="8" fill="none" stroke="#888" /></Art></BareButton>
          <BareButton aria-label="닫기"><Art w={10} h={10}><path d="M1 1l8 8M9 1L1 9" stroke="#888" /></Art></BareButton>
        </WindowButtons>
      </TitleBar>
      <MenuBar>
        {menus.map(([name, key]) => <MenuItem key={name}>{name} (<u>{key}</u>)</MenuItem>)}
      </MenuBar>
      <Tools items={fileTools} />
      <Tools items={layerTools} />
      <Workspace>
        <Docks>
          <Dock $grow={363}>
            <DockHeader title="탐색기" />
            <DockTools>
              {['addLayer', 'refresh', 'filter', 'collapse', 'info'].map((n) => <DockTool key={n} aria-label={n}><Icon name={n} size={13} /></DockTool>)}
            </DockTools>
            <DockBody>
              <Tree>
                {sources.map(([icon, name, arrow]) => (
                  <TreeItem key={name}>
                    <TreeArrow $shown={arrow} />
                    <Icon name={icon} size={13} />
                    {name}
                  </TreeItem>
                ))}
              </Tree>
            </DockBody>
          </Dock>
          <Dock $grow={302}>
            <DockHeader title="레이어" top={5} />
            <DockTools>
              <DockTool aria-label="스타일"><Icon name="brush" size={13} /></DockTool>
              <DockTool aria-label="그룹 추가"><Icon name="group" size={13} /></DockTool>
              <DockTool aria-label="가시성"><Icon name="eye" size={13} /></DockTool>
              <DockTool aria-label="필터"><Icon name="filter" size={13} /></DockTool>
              <DockTool aria-label="표현식" $menu><Icon name="expression" size={13} /><Caret $size={3} $color="#999" /></DockTool>
              <DockTool aria-label="모두 펼치기"><Icon name="expand" size={13} /></DockTool>
              <DockTool aria-label="모두 접기"><Icon name="collapse" size={13} /></DockTool>
              <DockTool aria-label="레이어 삭제"><Icon name="removeLayer" size={13} /></DockTool>
            </DockTools>
            <DockBody />
          </Dock>
        </Docks>
        <Main>
          <MainTitle>최근 사용한 프로젝트</MainTitle>
          <Canvas />
          <Message>
            <p>
              <b>새 버전의 QGIS를 사용할 수 있습니다:</b> Visit <a href="https://download.qgis.org">https://download.qgis.org</a> to get your copy of version 3.14.16
            </p>
            <Steps><i /><i /></Steps>
          </Message>
        </Main>
      </Workspace>
      <StatusBar>
        <SearchBox>
          <Icon name="search" size={11} />
          <input placeholder="위치를 찾으려면 입력하세요 (Ctrl+K)" aria-label="검색" />
        </SearchBox>
        <StatusItems>
          <Field>좌표<FieldBox $width={82}><input /></FieldBox></Field>
          <Icon name="mouse" size={13} />
          <Field>
            축척
            <FieldBox $width={62}>
              <select defaultValue="1:1"><option>1:1</option></select>
              <FieldEnd $width={15}><Caret $size={3} $color="#555" /></FieldEnd>
            </FieldBox>
          </Field>
          <Icon name="lock" size={13} />
          <Spin label="확대경" width={67} value="100%" />
          <Spin label="회전" width={64} value="0.0 °" />
          <Field><Tick type="checkbox" defaultChecked />렌더링</Field>
          <Field as="span"><Icon name="crs" size={12} />EPSG:4326</Field>
          <Icon name="chat" size={14} />
        </StatusItems>
      </StatusBar>
    </Qgis>
  );
}

/* ---------- red call-outs drawn over both windows ---------- */

const CallOuts = styled.svg`
  position: absolute;
  left: 0;
  top: 0;
  width: 860px;
  height: 600px;
  pointer-events: none;
`;

export default function App() {
  return (
    <Page>
      <GlobalStyle />
      <FileExplorer />
      <QgisWindow />
      <CallOuts viewBox="0 0 860 600" fill="none" stroke="#f00" aria-hidden="true">
        <path d="M9 376.500h588M9 479.500h588" strokeWidth="3" />
        <path d="M597 376l220 188M597 479l218 87" strokeWidth="1.200" />
        <path d="M824 570l-6-13-9 10zM824 570l-10-11-3 12z" fill="#f00" stroke="none" />
        <rect x="525" y="353" width="56" height="22" rx="4" strokeWidth="2" strokeDasharray="6 3" />
        <rect x="491" y="455" width="69" height="23" rx="4" strokeWidth="2" strokeDasharray="6 3" />
        <rect x="783.500" y="479.500" width="67" height="25" rx="4" strokeWidth="5" strokeDasharray="14 6" />
      </CallOuts>
    </Page>
  );
}
